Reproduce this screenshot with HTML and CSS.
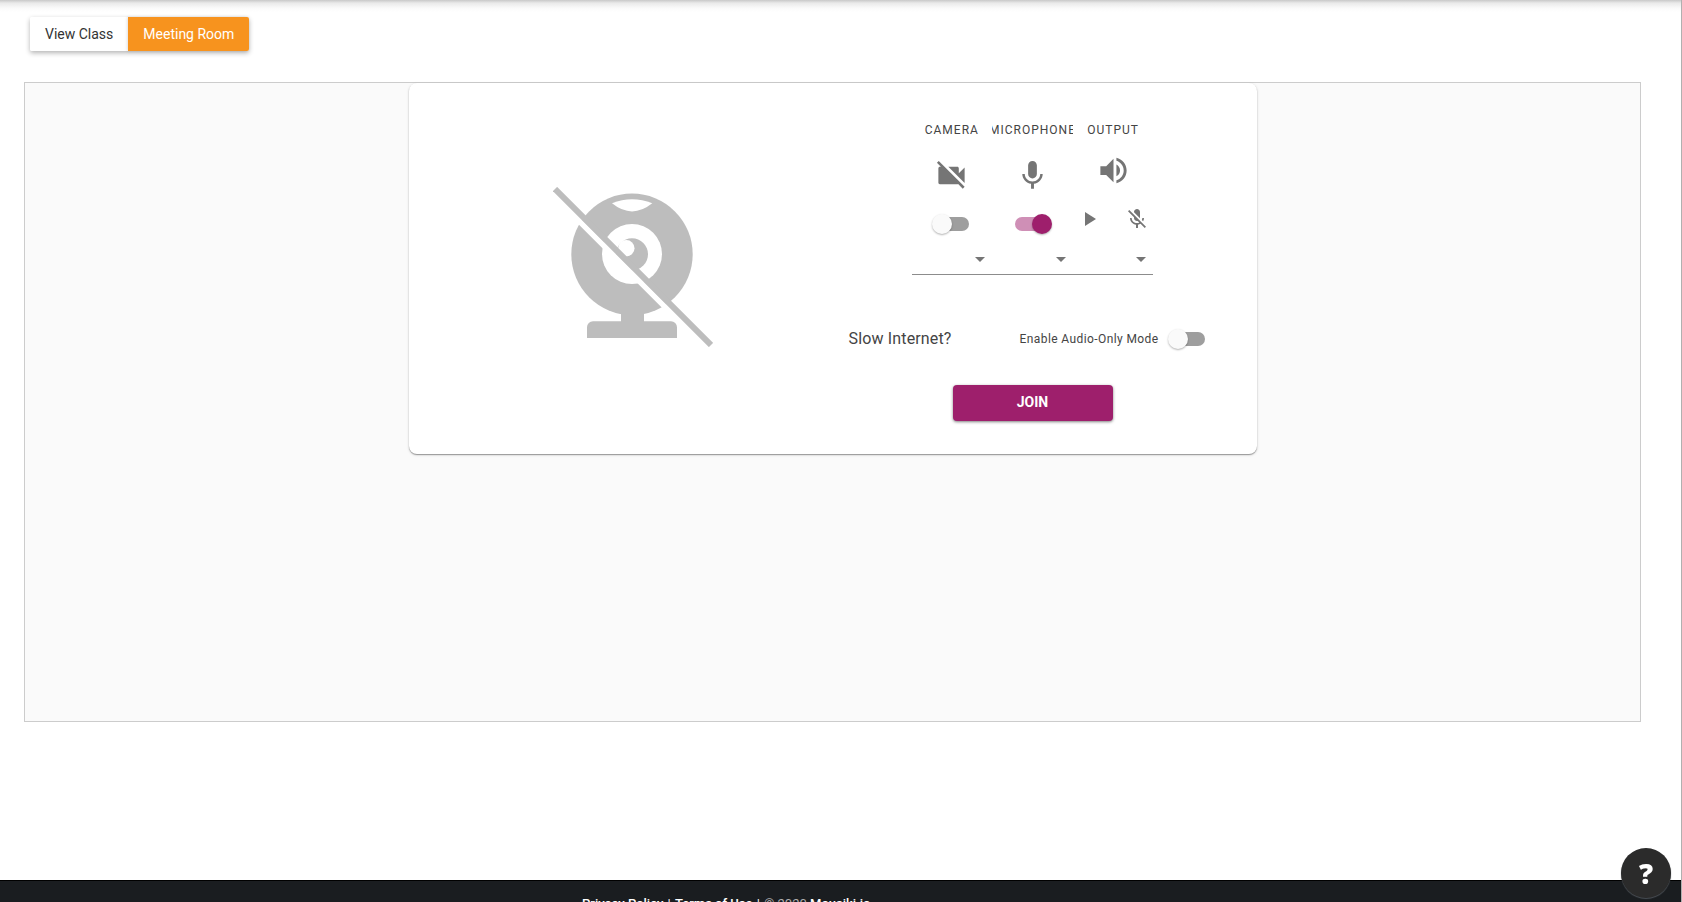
FILE: index.html
```html
<!DOCTYPE html>
<html lang="en">
<head>
<meta charset="utf-8">
<title>Meeting Room</title>
<link rel="stylesheet" href="styles.css">
</head>
<body>
<div class="page">
  <main class="content">
    <nav class="tabs">
      <button class="tab" type="button">View Class</button>
      <button class="tab tab-active" type="button">Meeting Room</button>
    </nav>
    <section class="room">
      <div class="card">
        <div class="preview">
          <svg class="webcam" viewBox="0 0 160 160" aria-hidden="true">
            <circle cx="79" cy="67.3" r="60.7" fill="#bdbdbd"/>
            <path d="M68 120h23v14.3h27a6 6 0 0 1 6 6V151H34v-10.700a6 6 0 0 1 6-6h28z" fill="#bdbdbd"/>
            <path d="M59 16.300Q79 8 99.300 16.300Q79 32.500 59 16.300z" fill="#fff"/>
            <circle cx="79" cy="67" r="30" fill="#fff"/>
            <circle cx="79" cy="67.300" r="16" fill="#bdbdbd"/>
            <circle cx="73.300" cy="61.200" r="8.200" fill="#fff"/>
            <path d="M0 7.800l152 152" stroke="#fff" stroke-width="5.600"/>
            <path d="M2 2l156 156" stroke="#bdbdbd" stroke-width="6"/>
          </svg>
        </div>
        <div class="setup">
          <div class="devices">
            <div class="device">
              <h2 class="device-name">Camera</h2>
              <div class="device-icon">
                <svg class="icon-large" viewBox="0 0 24 24" aria-hidden="true"><path d="M21 6.500l-4 4V7c0-.55-.45-1-1-1H9.820L21 17.180V6.500zM3.270 2L2 3.270 4.730 6H4c-.55 0-1 .45-1 1v10c0 .55.45 1 1 1h12c.21 0 .39-.08.54-.18L19.730 21 21 19.730 3.270 2z"/></svg>
              </div>
              <input class="switch" type="checkbox" role="switch" aria-label="Camera">
            </div>
            <div class="device">
              <h2 class="device-name">Microphone</h2>
              <div class="device-icon">
                <svg class="icon-large" viewBox="0 0 24 24" aria-hidden="true"><path d="M12 14c1.660 0 2.990-1.340 2.990-3L15 5c0-1.660-1.340-3-3-3S9 3.340 9 5v6c0 1.660 1.340 3 3 3zm5.300-3c0 3-2.540 5.100-5.300 5.100S6.700 14 6.700 11H5c0 3.410 2.720 6.230 6 6.720V21h2v-3.280c3.280-.48 6-3.300 6-6.720h-1.700z"/></svg>
              </div>
              <input class="switch" type="checkbox" role="switch" aria-label="Microphone" checked>
            </div>
            <div class="device">
              <h2 class="device-name">Output</h2>
              <div class="device-icon">
                <svg class="icon-large" viewBox="0 0 24 24" aria-hidden="true"><path d="M3 9v6h4l5 5V4L7 9H3zm13.500 3c0-1.770-1.020-3.290-2.500-4.030v8.050c1.480-.73 2.500-2.250 2.500-4.020zM14 3.230v2.060c2.890.86 5 3.540 5 6.710s-2.110 5.850-5 6.710v2.060c4.010-.91 7-4.490 7-8.770s-2.990-7.860-7-8.770z"/></svg>
              </div>
              <div class="output-actions">
                <button class="icon-button" type="button" aria-label="Play test sound">
                  <svg class="icon" viewBox="0 0 24 24" aria-hidden="true"><path d="M8 5v14l11-7z"/></svg>
                </button>
                <button class="icon-button" type="button" aria-label="Mute">
                  <svg class="icon" viewBox="0 0 24 24" aria-hidden="true"><path d="M19 11h-1.700c0 .74-.16 1.430-.43 2.050l1.230 1.230c.56-.98.9-2.090.9-3.280zm-4.020.17c0-.06.02-.11.02-.17V5c0-1.660-1.340-3-3-3S9 3.340 9 5v.18l5.980 5.990zM4.270 3L3 4.270l6.010 6.010V11c0 1.660 1.330 3 2.990 3 .22 0 .44-.03.65-.08l1.660 1.660c-.71.33-1.500.52-2.310.52-2.760 0-5.300-2.100-5.300-5.100H5c0 3.410 2.720 6.230 6 6.720V21h2v-3.280c.91-.13 1.770-.45 2.540-.9L19.730 21 21 19.730 4.270 3z"/></svg>
                </button>
              </div>
            </div>
          </div>
          <div class="selectors">
            <select class="selector" aria-label="Camera device"></select>
            <select class="selector" aria-label="Microphone device"></select>
            <select class="selector" aria-label="Output device"></select>
          </div>
          <div class="audio-only">
            <p class="question">Slow Internet?</p>
            <div class="audio-toggle">
              <label class="audio-label" for="audio-only">Enable Audio-Only Mode</label>
              <input class="switch" id="audio-only" type="checkbox" role="switch">
            </div>
          </div>
          <button class="join" type="button">JOIN</button>
        </div>
      </div>
    </section>
  </main>
  <footer class="footer">
    <p class="legal"><a href="#">Privacy Policy</a> <span class="separator">|</span> <a href="#">Terms of Use</a> <span class="separator">|</span> <span class="copyright">© 2020</span> <a href="#">Mousiki.io</a></p>
  </footer>
</div>
<button class="help" type="button" aria-label="Help">?</button>
</body>
</html>
```
FILE: styles.css
```css
* {
  box-sizing: border-box;
}

body {
  margin: 0;
  height: 100vh;
  overflow: hidden;
  font-family: Roboto, "Liberation Sans", sans-serif;
  font-size: 14px;
  color: #444;
}

h2,
p {
  margin: 0;
  font-weight: 400;
}

button {
  font-family: inherit;
  cursor: pointer;
}

.page {
  height: 100vh;
  display: flex;
  flex-direction: column;
  border-right: 1px solid #b0b0b0;
  background: linear-gradient(#c8c8c8, #e9e9e9 3px, #fafafa 8px, #fff 12px);
}

.content {
  flex: 1;
  padding: 17px 40px 0 24px;
}

.tabs {
  display: inline-flex;
  margin-left: 6px;
  border-radius: 2px;
  box-shadow: 0 2px 5px rgba(0, 0, 0, 0.3);
}

.tab {
  height: 34px;
  padding: 0 15px;
  border: 0;
  border-radius: 2px 0 0 2px;
  background: #fff;
  color: #333;
  font-size: 14px;
}

.tab-active {
  border-radius: 0 2px 2px 0;
  background: #f7931e;
  color: #fff;
  box-shadow: -1px 0 3px rgba(0, 0, 0, 0.12);
}

.room {
  display: flex;
  justify-content: center;
  align-items: flex-start;
  height: 640px;
  margin-top: 31px;
  border: 1px solid #ccc;
  background: #fafafa;
}

.card {
  display: grid;
  grid-template-columns: 1fr 1fr;
  gap: 32px;
  width: 848px;
  padding: 31px 40px 33px;
  border-radius: 8px;
  background: #fff;
  box-shadow: 0 1px 1px rgba(0, 0, 0, 0.32), 0 1px 3px rgba(0, 0, 0, 0.16);
}

.preview {
  display: flex;
  align-items: center;
  justify-content: center;
  padding-bottom: 2px;
}

.webcam {
  width: 160px;
  height: 160px;
}

.setup {
  display: flex;
  flex-direction: column;
  align-items: center;
}

.devices,
.selectors {
  display: grid;
  grid-template-columns: repeat(3, minmax(0, 1fr));
  width: 242px;
}

.device {
  display: flex;
  flex-direction: column;
  align-items: center;
  height: 129px;
}

.device-name {
  display: flex;
  justify-content: center;
  width: 100%;
  overflow: hidden;
  font-size: 12px;
  line-height: 32px;
  letter-spacing: 1px;
  text-transform: uppercase;
}

.device-icon {
  flex: 1;
  display: flex;
  align-items: center;
}

.icon-large {
  width: 35px;
  height: 35px;
  fill: #757575;
}

.icon {
  display: block;
  width: 24px;
  height: 24px;
  fill: #757575;
}

.output-actions {
  display: flex;
}

.icon-button {
  padding: 12px;
  border: 0;
  background: none;
}

.switch {
  appearance: none;
  display: grid;
  align-items: center;
  width: 58px;
  height: 38px;
  margin: 0;
  padding: 0 9px;
  cursor: pointer;
}

.switch::before,
.switch::after {
  content: "";
  grid-area: 1 / 1;
}

.switch::before {
  height: 14px;
  margin: 0 3px;
  border-radius: 7px;
  background: #9e9e9e;
}

.switch::after {
  width: 20px;
  height: 20px;
  border-radius: 50%;
  background: #fafafa;
  box-shadow: 0 1px 2px rgba(0, 0, 0, 0.3);
}

.switch:checked::before {
  background: #cf8fb6;
}

.switch:checked::after {
  justify-self: end;
  background: #9e1f6c;
}

.selector {
  appearance: none;
  height: 32px;
  border: 0;
  border-bottom: 1px solid #8c8c8c;
  border-radius: 0;
  background: url("data:image/svg+xml,%3Csvg xmlns='http://www.w3.org/2000/svg' width='24' height='24' fill='%23757575'%3E%3Cpath d='M7 10l5 5 5-5z'/%3E%3C/svg%3E") no-repeat right 4px;
}

.audio-only {
  align-self: stretch;
  display: flex;
  align-items: center;
  justify-content: space-between;
  margin-top: 45px;
}

.question {
  font-size: 16px;
  line-height: 20px;
  letter-spacing: 0.15px;
}

.audio-toggle {
  display: flex;
  align-items: center;
}

.audio-label {
  font-size: 12px;
  letter-spacing: 0.4px;
}

.join {
  width: 160px;
  height: 36px;
  margin-top: 27px;
  padding: 0 0 3px;
  border: 0;
  border-radius: 4px;
  background: #9e1f6c;
  color: #fff;
  font-size: 14px;
  font-weight: 700;
  box-shadow: 0 1px 3px rgba(0, 0, 0, 0.5);
}

.footer {
  height: 22px;
  padding: 14px 0 0 582px;
  border-top: 1px solid #000;
  background: #1a1d20;
  overflow: hidden;
}

.legal {
  color: #fff;
  font-size: 13px;
  line-height: 18px;
  white-space: nowrap;
}

.legal a {
  color: #fff;
  font-weight: 500;
  text-decoration: none;
}

.separator {
  margin: 0 1px;
}

.copyright {
  color: #b0b0b0;
}

.help {
  position: fixed;
  right: 11px;
  bottom: 4px;
  width: 50px;
  height: 50px;
  padding: 0;
  border: 0;
  border-radius: 50%;
  background: #2b2b2b;
  color: #fff;
  font-family: "Open Sans", sans-serif;
  font-size: 28px;
  font-weight: 800;
  line-height: 50px;
  box-shadow: 0 1px 1px #4a4f55;
}
```
